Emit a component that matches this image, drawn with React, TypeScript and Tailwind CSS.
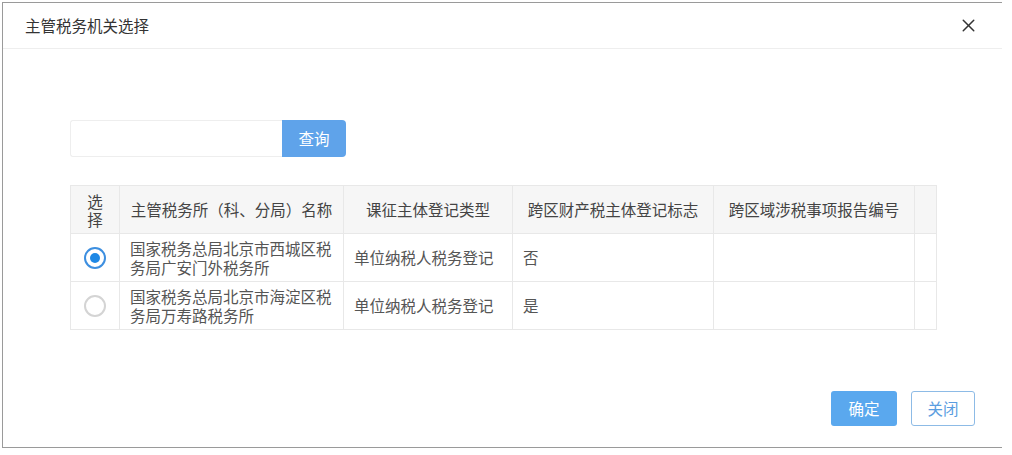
import { X } from 'lucide-react'

const rows = [
  { name: '国家税务总局北京市西城区税务局广安门外税务所', type: '单位纳税人税务登记', flag: '否', checked: true },
  { name: '国家税务总局北京市海淀区税务局万寿路税务所', type: '单位纳税人税务登记', flag: '是', checked: false },
]

function Radio({ checked }: { checked: boolean }) {
  return checked ? (
    <span className="mx-auto flex h-[22px] w-[22px] items-center justify-center rounded-full border-2 border-[#3d8fe0] bg-white">
      <span className="h-[10px] w-[10px] rounded-full bg-[#1e88e5]" />
    </span>
  ) : (
    <span className="mx-auto block h-[22px] w-[22px] rounded-full border-2 border-[#d4d4d4] bg-white" />
  )
}

export default function App() {
  return (
    <div
      className="h-[455px] w-[1012px] overflow-hidden bg-white pt-[2px] pl-[2px] text-[15.5px] text-[#555]"
      style={{ fontFamily: '"Microsoft YaHei", "Noto Sans CJK SC", sans-serif' }}
    >
      <div className="flex h-[446px] w-[1000px] flex-col border-t border-b border-l border-[#9a9a9a] bg-white">
        <div className="flex h-[46px] items-center justify-between border-b border-[#eeeeee] pr-[23px] pl-[22px]">
          <span className="text-[15.5px] text-[#333]">主管税务机关选择</span>
          <X className="h-[21px] w-[21px] text-[#333]" strokeWidth={1.7} />
        </div>

        <div className="relative flex-1 pt-[71px] pl-[67px]">
          <div className="flex h-[37px]">
            <input className="h-full w-[212px] rounded-l-[3px] border border-r-0 border-[#eeeeee] outline-none" />
            <button className="h-full w-[64px] rounded-r-[4px] bg-[#5fa3ea] text-[15.5px] text-white">查询</button>
          </div>

          <table className="mt-[28px] w-[866px] table-fixed border-collapse">
            <colgroup>
              <col className="w-[49px]" />
              <col className="w-[224px]" />
              <col className="w-[169px]" />
              <col className="w-[201px]" />
              <col className="w-[201px]" />
              <col className="w-[22px]" />
            </colgroup>
            <thead>
              <tr className="h-[48px] bg-[#f6f6f6] text-[#444]">
                <th className="border border-[#e8e8e8] text-center font-normal leading-[18px]">
                  选<br />择
                </th>
                <th className="border border-[#e8e8e8] text-center font-normal">主管税务所（科、分局）名称</th>
                <th className="border border-[#e8e8e8] text-center font-normal">课征主体登记类型</th>
                <th className="border border-[#e8e8e8] text-center font-normal">跨区财产税主体登记标志</th>
                <th className="border border-[#e8e8e8] text-center font-normal">跨区域涉税事项报告编号</th>
                <th className="border border-[#e8e8e8]" />
              </tr>
            </thead>
            <tbody>
              {rows.map((r) => (
                <tr key={r.name} className="h-[48px]">
                  <td className="border border-[#e8e8e8] text-center">
                    <Radio checked={r.checked} />
                  </td>
                  <td className="border border-[#e8e8e8] px-[10px] leading-[19px] break-all">{r.name}</td>
                  <td className="border border-[#e8e8e8] px-[10px]">{r.type}</td>
                  <td className="border border-[#e8e8e8] px-[10px]">{r.flag}</td>
                  <td className="border border-[#e8e8e8]" />
                  <td className="border border-[#e8e8e8]" />
                </tr>
              ))}
            </tbody>
          </table>

          <div className="absolute right-[27px] bottom-[21px] flex gap-[14px]">
            <button className="h-[35px] w-[66px] rounded-[3px] bg-[#5aa8ee] text-[15.5px] text-white">确定</button>
            <button className="h-[35px] w-[64px] rounded-[3px] border border-[#8dbbe6] bg-white text-[15.5px] text-[#5a9de0]">
              关闭
            </button>
          </div>
        </div>
      </div>
    </div>
  )
}
